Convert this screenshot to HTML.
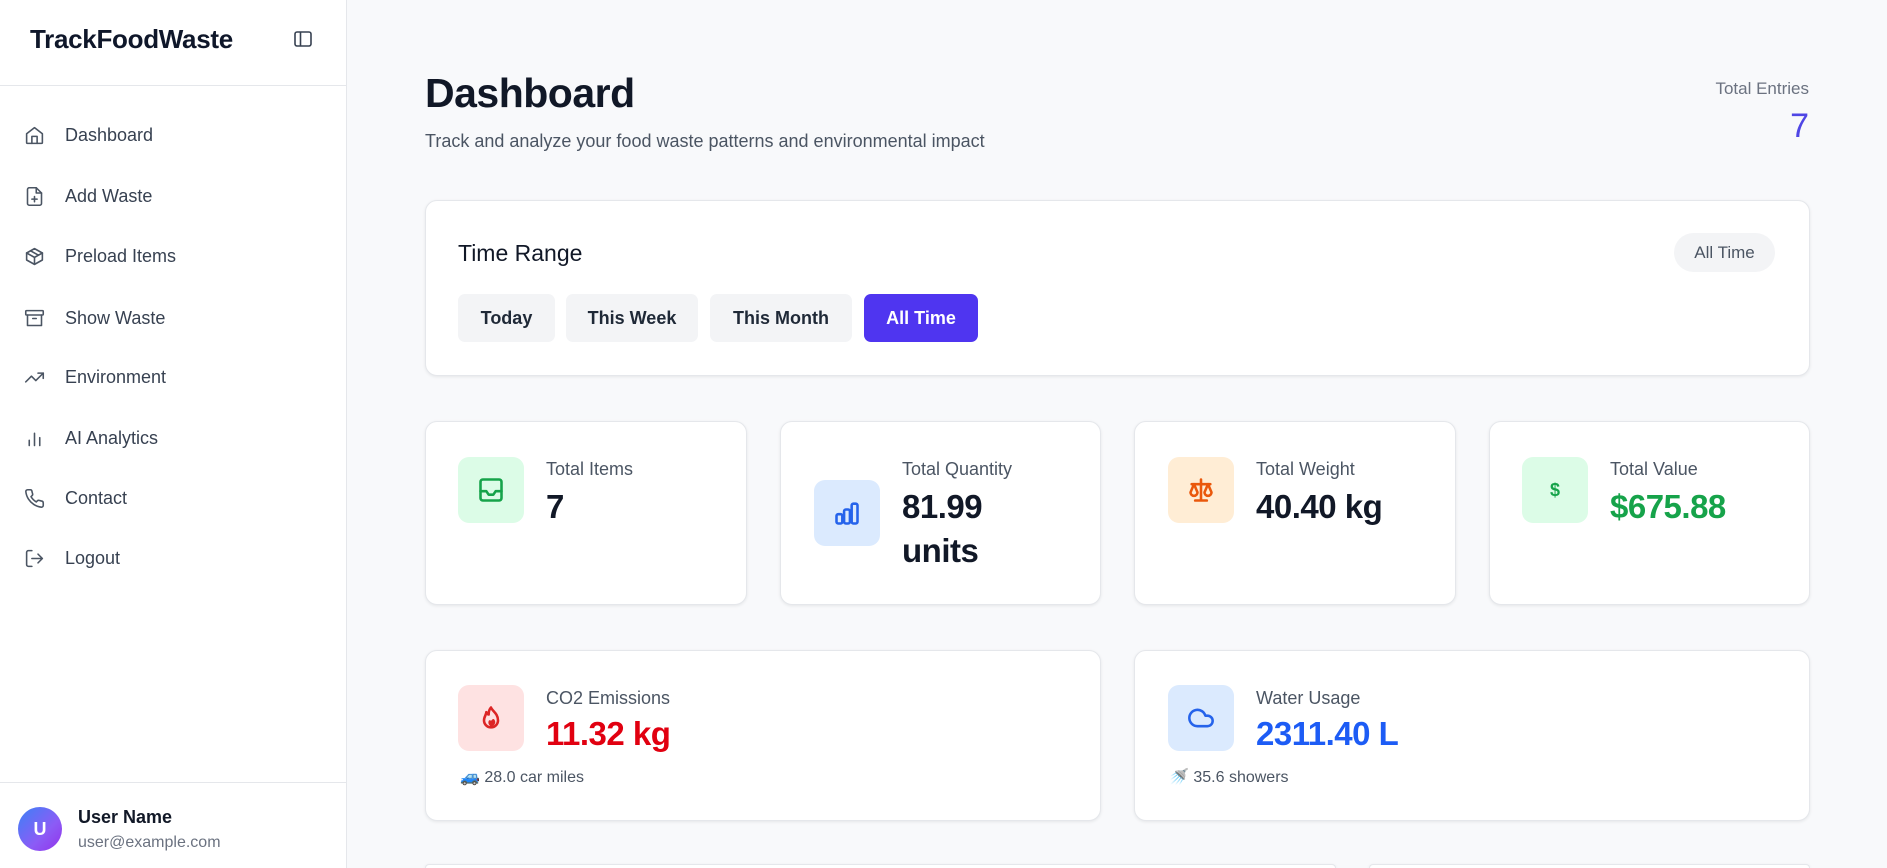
<!DOCTYPE html>
<html style="overflow:hidden;height:868px"><head><meta charset="utf-8"><style>
*{box-sizing:border-box;margin:0;padding:0}
body{width:1887px;height:868px;overflow:hidden;background:#f8f9fb;font-family:"Liberation Sans",sans-serif;color:#111827;position:relative}
.abs{position:absolute}
.side{left:0;top:0;width:347px;height:868px;background:#fff;border-right:1px solid #e5e7eb}
.nav{position:absolute;left:24px;display:flex;align-items:center;font-size:18px;color:#374151}
.nav svg{width:21px;height:21px;margin-right:20px;fill:none;stroke:#4b5563;stroke-width:1.8;stroke-linecap:round;stroke-linejoin:round}
.card{position:absolute;background:#fff;border:1px solid #e5e7eb;border-radius:12px;box-shadow:0 1px 3px rgba(0,0,0,.08)}
.btn{position:absolute;top:294px;height:48px;border-radius:7px;background:#f3f4f6;font-size:18px;font-weight:600;display:flex;align-items:center;justify-content:center;color:#1f2937}
.ib{position:absolute;width:66px;height:66px;border-radius:11px;display:flex;align-items:center;justify-content:center}
.ib svg{width:28px;height:28px;fill:none;stroke-width:2.2;stroke-linecap:round;stroke-linejoin:round}
.lbl{position:absolute;font-size:18px;color:#4b5563}
.val{position:absolute;font-size:33px;font-weight:bold;line-height:44px;letter-spacing:-0.5px}
.note{position:absolute;font-size:16px;color:#4b5563}
</style></head><body>
<div class="abs side"></div>
<div class="abs" style="left:30px;top:24px;font-size:26px;font-weight:bold;color:#0f172a;letter-spacing:-0.3px">TrackFoodWaste</div>
<svg class="abs" style="left:293px;top:29px" width="20" height="20" viewBox="0 0 20 20" fill="none" stroke="#374151" stroke-width="1.6"><rect x="2" y="3" width="16" height="14" rx="2"/><line x1="7.5" y1="3" x2="7.5" y2="17"/></svg>
<div class="abs" style="left:0;top:85px;width:347px;border-top:1px solid #e5e7eb"></div>

<div class="nav" style="top:125px"><svg viewBox="0 0 24 24"><path d="M3 10l9-7 9 7v10a1 1 0 0 1-1 1H4a1 1 0 0 1-1-1z"/><path d="M9 21v-8h6v8"/></svg>Dashboard</div>
<div class="nav" style="top:186px"><svg viewBox="0 0 24 24"><path d="M14 2H6a2 2 0 0 0-2 2v16a2 2 0 0 0 2 2h12a2 2 0 0 0 2-2V8z"/><path d="M14 2v6h6M12 12v6M9 15h6"/></svg>Add Waste</div>
<div class="nav" style="top:246px"><svg viewBox="0 0 24 24"><path d="M21 8l-9-5-9 5v8l9 5 9-5z"/><path d="M3 8l9 5 9-5M12 13v8M7.5 5.5l9 5"/></svg>Preload Items</div>
<div class="nav" style="top:308px"><svg viewBox="0 0 24 24"><rect x="2" y="3" width="20" height="5" rx="1"/><path d="M4 8v12h16V8M10 12h4"/></svg>Show Waste</div>
<div class="nav" style="top:367px"><svg viewBox="0 0 24 24"><path d="M22 7l-8.5 8.5-5-5L2 17"/><path d="M16 7h6v6"/></svg>Environment</div>
<div class="nav" style="top:428px"><svg viewBox="0 0 24 24"><path d="M6 20v-6M12 20V6M18 20v-9"/></svg>AI Analytics</div>
<div class="nav" style="top:488px"><svg viewBox="0 0 24 24"><path d="M22 16.9v3a2 2 0 0 1-2.2 2 19.8 19.8 0 0 1-8.6-3.1 19.5 19.5 0 0 1-6-6A19.8 19.8 0 0 1 2.1 4.2 2 2 0 0 1 4.1 2h3a2 2 0 0 1 2 1.7c.1 1 .4 1.9.7 2.8a2 2 0 0 1-.5 2.1L8 9.9a16 16 0 0 0 6 6l1.3-1.3a2 2 0 0 1 2.1-.4c.9.3 1.8.6 2.8.7a2 2 0 0 1 1.7 2z"/></svg>Contact</div>
<div class="nav" style="top:548px"><svg viewBox="0 0 24 24"><path d="M9 21H5a2 2 0 0 1-2-2V5a2 2 0 0 1 2-2h4M16 17l5-5-5-5M21 12H9"/></svg>Logout</div>

<div class="abs" style="left:0;top:782px;width:347px;border-top:1px solid #e5e7eb"></div>
<div class="abs" style="left:18px;top:807px;width:44px;height:44px;border-radius:50%;background:linear-gradient(135deg,#3b82f6,#8b5cf6 60%,#9333ea);color:#fff;font-weight:bold;font-size:18px;display:flex;align-items:center;justify-content:center">U</div>
<div class="abs" style="left:78px;top:807px;font-size:18px;font-weight:600">User Name</div>
<div class="abs" style="left:78px;top:834px;font-size:16px;color:#6b7280">user@example.com</div>

<div class="abs" style="left:425px;top:70px;font-size:41px;font-weight:bold;letter-spacing:-0.5px">Dashboard</div>
<div class="abs" style="left:425px;top:131px;font-size:18px;color:#4b5563">Track and analyze your food waste patterns and environmental impact</div>
<div class="abs" style="right:78px;top:79px;font-size:17px;color:#6b7280;text-align:right">Total Entries</div>
<div class="abs" style="right:78px;top:107px;font-size:34px;color:#4f46e5">7</div>

<div class="card" style="left:425px;top:200px;width:1385px;height:176px"></div>
<div class="abs" style="left:458px;top:240px;font-size:23px;font-weight:500">Time Range</div>
<div class="abs" style="left:1674px;top:233px;width:101px;height:39px;border-radius:20px;background:#f3f4f6;color:#4b5563;font-size:17px;display:flex;align-items:center;justify-content:center">All Time</div>
<div class="btn" style="left:458px;width:97px">Today</div>
<div class="btn" style="left:566px;width:132px">This Week</div>
<div class="btn" style="left:710px;width:142px">This Month</div>
<div class="btn" style="left:864px;width:114px;background:#4f35f0;color:#fff">All Time</div>

<div class="card" style="left:425px;top:421px;width:322px;height:184px"></div>
<div class="card" style="left:780px;top:421px;width:321px;height:184px"></div>
<div class="card" style="left:1134px;top:421px;width:322px;height:184px"></div>
<div class="card" style="left:1489px;top:421px;width:321px;height:184px"></div>

<div class="ib" style="left:458px;top:457px;background:#dcfce7"><svg viewBox="0 0 24 24" stroke="#16a34a"><rect x="3" y="3" width="18" height="18" rx="2"/><path d="M3 13h5l2 3h4l2-3h5"/></svg></div>
<div class="lbl" style="left:546px;top:459px">Total Items</div>
<div class="val" style="left:546px;top:485px">7</div>

<div class="ib" style="left:814px;top:480px;background:#dbeafe"><svg viewBox="0 0 24 24" stroke="#2563eb"><rect x="3" y="13" width="5" height="8" rx="1.5"/><rect x="9.5" y="9" width="5" height="12" rx="1.5"/><rect x="16" y="4" width="5" height="17" rx="1.5"/></svg></div>
<div class="lbl" style="left:902px;top:459px">Total Quantity</div>
<div class="val" style="left:902px;top:485px">81.99<br>units</div>

<div class="ib" style="left:1168px;top:457px;background:#ffedd5"><svg viewBox="0 0 24 24" stroke="#ea580c"><path d="M12 3v18M7 21h10M4 7h16"/><path d="M6 7l-3 7a3 3 0 0 0 6 0zM18 7l-3 7a3 3 0 0 0 6 0z"/></svg></div>
<div class="lbl" style="left:1256px;top:459px">Total Weight</div>
<div class="val" style="left:1256px;top:485px">40.40 kg</div>

<div class="ib" style="left:1522px;top:457px;background:#dcfce7;color:#16a34a;font-weight:bold;font-size:18px">$</div>
<div class="lbl" style="left:1610px;top:459px">Total Value</div>
<div class="val" style="left:1610px;top:485px;color:#16a34a">$675.88</div>

<div class="card" style="left:425px;top:650px;width:676px;height:171px"></div>
<div class="card" style="left:1134px;top:650px;width:676px;height:171px"></div>

<div class="ib" style="left:458px;top:685px;background:#fee2e2"><svg viewBox="0 0 24 24" stroke="#dc2626"><path d="M12 3c1 3 6 5 6 11a6 6 0 0 1-12 0c0-3 2-5 2-7 1 2 2 2 2 2 0-3 1-5 2-6z"/><path d="M12 18a2.5 2.5 0 0 0 2-4l-2 2-1-1a2.5 2.5 0 0 0 1 3z"/></svg></div>
<div class="lbl" style="left:546px;top:688px">CO2 Emissions</div>
<div class="val" style="left:546px;top:712px;color:#e10010">11.32 kg</div>
<div class="note" style="left:460px;top:767px">🚙 28.0 car miles</div>

<div class="ib" style="left:1168px;top:685px;background:#dbeafe"><svg viewBox="0 0 24 24" stroke="#2563eb"><path d="M17.5 19H9a7 7 0 1 1 6.7-9h1.8a4.5 4.5 0 1 1 0 9z"/></svg></div>
<div class="lbl" style="left:1256px;top:688px">Water Usage</div>
<div class="val" style="left:1256px;top:712px;color:#1d5cf5">2311.40 L</div>
<div class="note" style="left:1169px;top:767px">🚿 35.6 showers</div>

<div class="card" style="left:425px;top:864px;width:911px;height:4px;border-bottom:none;border-radius:12px 12px 0 0"></div>
<div class="card" style="left:1369px;top:864px;width:441px;height:4px;border-bottom:none;border-radius:12px 12px 0 0"></div>
</body></html>
